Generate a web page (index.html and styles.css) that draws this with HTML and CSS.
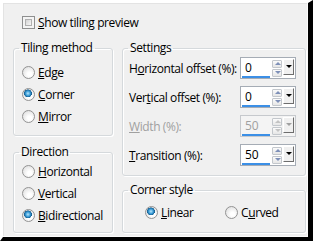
FILE: index.html
```html
<!DOCTYPE html>
<html>
<head>
  <title>Tiling</title>
  <link rel="stylesheet" href="styles.css">
</head>
<body>
  <div class="window">
    <div class="dialog">
      <label class="check-row"><span class="checkbox"></span><span><u>S</u>how tiling preview</span></label>

      <div class="columns">
        <div class="col left-col">
          <fieldset class="group tiling">
            <legend>Tiling method</legend>
            <div class="options">
              <div class="radio-row"><span class="radio"></span><span><u>E</u>dge</span></div>
              <div class="radio-row"><span class="radio checked"></span><span><u>C</u>orner</span></div>
              <div class="radio-row"><span class="radio"></span><span><u>M</u>irror</span></div>
            </div>
          </fieldset>

          <fieldset class="group direction">
            <legend>Direction</legend>
            <div class="options">
              <div class="radio-row"><span class="radio"></span><span><u>H</u>orizontal</span></div>
              <div class="radio-row"><span class="radio"></span><span><u>V</u>ertical</span></div>
              <div class="radio-row"><span class="radio checked"></span><span><u>B</u>idirectional</span></div>
            </div>
          </fieldset>
        </div>

        <div class="col right-col">
          <fieldset class="group settings">
            <legend>Settings</legend>
            <div class="fields">
              <div class="field-row">
                <span>H<u>o</u>rizontal offset (%):</span>
                <div class="spin">
                  <span class="spin-edit">0</span>
                  <span class="spin-arrows"><span class="arrow up"></span><span class="arrow down"></span></span>
                  <span class="spin-drop"></span>
                </div>
              </div>
              <div class="field-row">
                <span>Ver<u>t</u>ical offset (%):</span>
                <div class="spin">
                  <span class="spin-edit">0</span>
                  <span class="spin-arrows"><span class="arrow up"></span><span class="arrow down"></span></span>
                  <span class="spin-drop"></span>
                </div>
              </div>
              <div class="field-row disabled">
                <span><u>W</u>idth (%):</span>
                <div class="spin">
                  <span class="spin-edit">50</span>
                  <span class="spin-arrows"><span class="arrow up"></span><span class="arrow down"></span></span>
                  <span class="spin-drop"></span>
                </div>
              </div>
              <div class="field-row">
                <span><u>T</u>ransition (%):</span>
                <div class="spin">
                  <span class="spin-edit">50</span>
                  <span class="spin-arrows"><span class="arrow up"></span><span class="arrow down"></span></span>
                  <span class="spin-drop"></span>
                </div>
              </div>
            </div>
          </fieldset>

          <fieldset class="group corner">
            <legend>Corner style</legend>
            <div class="inline-radios">
              <div class="radio-row"><span class="radio checked"></span><span><u>L</u>inear</span></div>
              <div class="radio-row"><span class="radio"></span><span>C<u>u</u>rved</span></div>
            </div>
          </fieldset>
        </div>
      </div>
    </div>
  </div>
</body>
</html>
```

FILE: styles.css
```css
body {
  margin: 0;
  background-color: #ffffff;
  font-family: "Open Sans", sans-serif;
  font-size: 12px;
  letter-spacing: -0.4px;
  color: #000000;
  white-space: nowrap;
}

u {
  text-decoration-thickness: 1px;
  text-underline-offset: 1px;
}

.window {
  width: 313px;
  height: 241px;
  box-sizing: border-box;
  border-top: 3px solid #ffffff;
  border-left: 3px solid #ffffff;
  border-right: 5px solid #000000;
  border-bottom: 4px solid #000000;
  background-color: #f0f0f0;
  box-shadow: inset -1px -1px 0 #fbfbfb, inset 1px 1px 0 #e3e3e3;
}

.dialog {
  padding: 12px 0 0 10px;
}

.check-row {
  display: flex;
  align-items: center;
  gap: 3px;
  height: 15px;
  padding-left: 9px;
  line-height: 15px;
}

.checkbox {
  width: 11px;
  height: 11px;
  border: 1px solid #8e8f8f;
  background-color: #ffffff;
  box-shadow: inset 0 0 0 2px #f4f4f4, inset 0 0 0 3px #b0b0b0;
  background-image: linear-gradient(135deg, #d3d3d3, #f7f7f7);
  background-size: 5px 5px;
  background-position: 3px 3px;
  background-repeat: no-repeat;
}

.columns {
  display: flex;
  gap: 9px;
  margin-top: 10px;
}

.col {
  display: flex;
  flex-direction: column;
}

.left-col {
  width: 100px;
  gap: 8px;
}

.right-col {
  width: 184px;
  gap: 6px;
}

.group {
  margin: 0;
  padding: 0;
  min-width: 0;
  box-sizing: border-box;
  border: 1px solid #d5d9dc;
  border-radius: 3px;
  box-shadow: inset 1px 1px 0 #ffffff, 1px 1px 0 #ffffff;
}

.group legend {
  margin-left: 5px;
  padding: 0 2px;
  line-height: 16px;
}

.tiling {
  height: 96px;
}

.tiling .options {
  padding: 5px 0 0 8px;
}

.direction {
  height: 89px;
}

.direction .options {
  padding-left: 8px;
}

.settings {
  height: 136px;
}

.fields {
  padding-top: 1px;
}

.corner {
  height: 51px;
}

.radio-row {
  display: flex;
  align-items: center;
  gap: 3px;
  height: 22px;
}

.radio {
  width: 11px;
  height: 11px;
  border: 1px solid #939393;
  border-radius: 50%;
  background: radial-gradient(circle at 60% 65%, #ffffff 20%, #e4e4e4 75%, #d8d8d8);
}

.radio.checked {
  background:
    radial-gradient(circle at 45% 40%, #b9e6fb 0, #3d9fd9 25%, #145e91 42%, transparent 46%),
    radial-gradient(circle at 60% 65%, #ffffff 20%, #e4e4e4 75%, #d8d8d8);
}

.inline-radios {
  display: flex;
  padding: 3px 0 0 22px;
}

.inline-radios .radio-row {
  width: 80px;
}

.field-row {
  display: flex;
  align-items: center;
  justify-content: space-between;
  height: 22px;
  padding: 0 9px 0 6px;
  margin-bottom: 7px;
}

.field-row.disabled {
  color: #a0a0a0;
}

.spin {
  display: flex;
  align-items: flex-start;
  width: 56px;
  height: 22px;
  box-sizing: border-box;
  padding: 1px;
  border: 1px solid #a5acb5;
  background-color: #ffffff;
  letter-spacing: 0;
}

.disabled .spin {
  background-color: #f4f4f4;
  border-color: #c6c9cd;
}

.spin-edit {
  width: 27px;
  height: 17px;
  padding-left: 3px;
  line-height: 17px;
  border-bottom: 2px solid #3b8fe6;
}

.spin-arrows {
  display: flex;
  flex-direction: column;
  gap: 1px;
  width: 11px;
  margin: 1px 0 0 2px;
}

.arrow {
  position: relative;
  height: 6px;
  border: 1px solid #c3c7cc;
  border-radius: 1px;
  background: linear-gradient(#fbfbfb, #e6e6e6);
}

.arrow::after {
  content: "";
  position: absolute;
  left: 2px;
  width: 0;
  height: 0;
  border-left: 3px solid transparent;
  border-right: 3px solid transparent;
}

.arrow.up::after {
  top: 1px;
  border-bottom: 3px solid #7e90b8;
}

.arrow.down::after {
  top: 1px;
  border-top: 3px solid #7e90b8;
}

.disabled .arrow.up::after {
  border-bottom-color: #c3c3c3;
}

.disabled .arrow.down::after {
  border-top-color: #c3c3c3;
}

.spin-drop {
  position: relative;
  width: 10px;
  height: 14px;
  margin-left: 1px;
  border: 1px solid;
  border-color: #ffffff #6d6d6d #6d6d6d #ffffff;
  background-color: #f0f0f0;
}

.spin-drop::after {
  content: "";
  position: absolute;
  left: 2px;
  top: 5px;
  border-left: 3px solid transparent;
  border-right: 3px solid transparent;
  border-top: 3px solid #000000;
}

.disabled .spin-drop::after {
  border-top-color: #a0a0a0;
}
```
